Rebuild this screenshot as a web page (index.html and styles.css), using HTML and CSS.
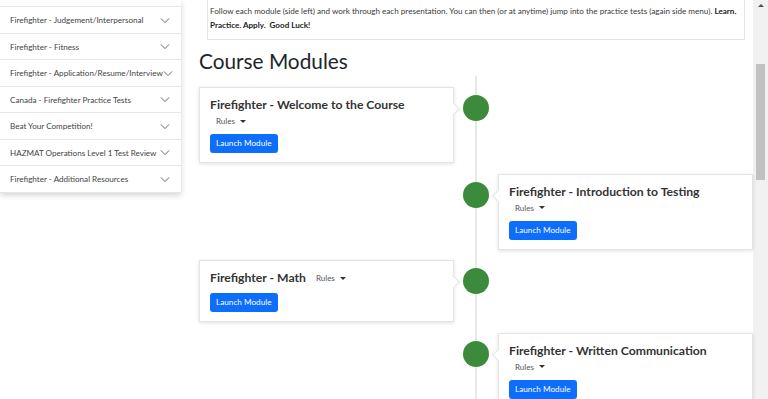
FILE: index.html
```html
<!DOCTYPE html>
<html>
<head>
<meta charset="utf-8">
<link rel="stylesheet" href="styles.css">
</head>
<body>
<div class="screen">
  <div class="page">
    <aside class="sidebar">
      <div class="side-item side-blank"></div>
      <div class="side-item"><span>Firefighter - Judgement/Interpersonal</span><svg class="chev" viewBox="0 0 12 8"><path d="M1 1.5 L6 6.5 L11 1.5" /></svg></div>
      <div class="side-item"><span>Firefighter - Fitness</span><svg class="chev" viewBox="0 0 12 8"><path d="M1 1.5 L6 6.5 L11 1.5" /></svg></div>
      <div class="side-item"><span>Firefighter - Application/Resume/Interview</span><svg class="chev" viewBox="0 0 12 8"><path d="M1 1.5 L6 6.5 L11 1.5" /></svg></div>
      <div class="side-item"><span>Canada - Firefighter Practice Tests</span><svg class="chev" viewBox="0 0 12 8"><path d="M1 1.5 L6 6.5 L11 1.5" /></svg></div>
      <div class="side-item"><span>Beat Your Competition!</span><svg class="chev" viewBox="0 0 12 8"><path d="M1 1.5 L6 6.5 L11 1.5" /></svg></div>
      <div class="side-item"><span>HAZMAT Operations Level 1 Test Review</span><svg class="chev" viewBox="0 0 12 8"><path d="M1 1.5 L6 6.5 L11 1.5" /></svg></div>
      <div class="side-item"><span>Firefighter - Additional Resources</span><svg class="chev" viewBox="0 0 12 8"><path d="M1 1.5 L6 6.5 L11 1.5" /></svg></div>
    </aside>
    <main class="main">
      <div class="intro">
        Follow each module (side left) and work through each presentation. You can then (or at anytime) jump into the practice tests (again side menu). <b>Learn. Practice. Apply.&nbsp; Good Luck!</b>
      </div>
      <h2 class="heading">Course Modules</h2>
      <div class="timeline">
        <div class="row">
          <div class="card card-left">
            <div class="card-title">Firefighter - Welcome to the Course</div>
            <div class="rules">Rules <span class="caret"></span></div>
            <button class="btn">Launch Module</button>
          </div>
          <div class="dot-col"><span class="dot"></span></div>
          <div class="empty"></div>
        </div>
        <div class="row">
          <div class="empty"></div>
          <div class="dot-col"><span class="dot"></span></div>
          <div class="card card-right">
            <div class="card-title">Firefighter - Introduction to Testing</div>
            <div class="rules">Rules <span class="caret"></span></div>
            <button class="btn">Launch Module</button>
          </div>
        </div>
        <div class="row">
          <div class="card card-left">
            <div class="title-line">
              <div class="card-title">Firefighter - Math</div>
              <div class="rules rules-inline">Rules <span class="caret"></span></div>
            </div>
            <button class="btn">Launch Module</button>
          </div>
          <div class="dot-col"><span class="dot"></span></div>
          <div class="empty"></div>
        </div>
        <div class="row">
          <div class="empty"></div>
          <div class="dot-col"><span class="dot"></span></div>
          <div class="card card-right">
            <div class="card-title">Firefighter - Written Communication</div>
            <div class="rules">Rules <span class="caret"></span></div>
            <button class="btn">Launch Module</button>
          </div>
        </div>
      </div>
    </main>
  </div>
  <div class="scrollbar">
    <div class="sb-arrow"></div>
    <div class="sb-thumb"></div>
  </div>
</div>
</body>
</html>
```

FILE: styles.css
```css
* { box-sizing: border-box; }
html, body { margin: 0; padding: 0; }
body {
  font-family: Lato, "Open Sans", "Liberation Sans", sans-serif;
  color: #212529;
  background: #fff;
  overflow: hidden;
}
.screen {
  display: flex;
  width: 768px;
  height: 399px;
  overflow: hidden;
}
.page {
  flex: 1;
  display: flex;
  align-items: flex-start;
  min-width: 0;
}
.sidebar {
  width: 181px;
  flex: none;
  background: #fff;
  box-shadow: 0 2px 6px rgba(0,0,0,0.18);
}
.side-item {
  height: 26.5px;
  display: flex;
  align-items: center;
  justify-content: space-between;
  padding: 1px 10px 0 10px;
  border-bottom: 1px solid #e6e6e6;
  font-size: 8.1px;
  color: #444;
  white-space: nowrap;
}
.side-blank { height: 7px; }
.chev {
  width: 10px;
  height: 7px;
  flex: none;
  margin-right: 1px;
}
.chev path { fill: none; stroke: #666; stroke-width: 1.2; }

.main {
  flex: 1;
  padding-left: 18px;
  min-width: 0;
}
.intro {
  margin: -1px 8px 0 8px;
  border: 1px solid #e3e3e3;
  border-top: none;
  padding: 5px 4px 7px 2px;
  font-size: 8.1px;
  line-height: 14px;
  color: #3a3a3a;
}
.intro b { color: #222; }
.heading {
  margin: 6px 0 0 0;
  font-size: 20.8px;
  font-weight: 400;
  line-height: 30px;
  color: #212529;
}
.timeline {
  margin-top: 0;
  padding-top: 11px;
  background-image: linear-gradient(#e8e8e8, #e8e8e8);
  background-size: 2px 100%;
  background-position: center top;
  background-repeat: no-repeat;
}
.row {
  display: grid;
  grid-template-columns: 1fr 44px 1fr;
  align-items: start;
  margin-bottom: 10.5px;
}
.card {
  position: relative;
  background: #fff;
  border: 1px solid #e4e4e4;
  box-shadow: 0 1px 4px rgba(0,0,0,0.12);
  padding: 8px 10px 9px 10px;
}
.card::after {
  content: "";
  position: absolute;
  top: 16px;
  width: 9px;
  height: 9px;
  background: #fff;
  transform: rotate(45deg);
}
.card-left::after {
  right: -5px;
  border-top: 1px solid #e4e4e4;
  border-right: 1px solid #e4e4e4;
}
.card-right::after {
  left: -5px;
  border-bottom: 1px solid #e4e4e4;
  border-left: 1px solid #e4e4e4;
}
.card-title {
  font-size: 12.2px;
  font-weight: 700;
  line-height: 18px;
  color: #333;
  white-space: nowrap;
}
.rules {
  font-size: 8px;
  line-height: 14px;
  color: #555;
  padding-left: 6px;
  display: flex;
  align-items: center;
}
.caret {
  display: inline-block;
  width: 0;
  height: 0;
  margin-left: 5px;
  border-left: 3px solid transparent;
  border-right: 3px solid transparent;
  border-top: 3.5px solid #333;
}
.title-line {
  display: flex;
  align-items: center;
}
.rules-inline { padding-left: 10px; }
.btn {
  display: block;
  margin-top: 6px;
  height: 19px;
  padding: 0 6px;
  border: none;
  border-radius: 3px;
  background: #0d6efd;
  color: #fff;
  font-family: inherit;
  font-size: 8.2px;
  line-height: 19px;
}
.dot-col {
  display: flex;
  justify-content: center;
  padding-top: 8px;
}
.dot {
  width: 26px;
  height: 26px;
  border-radius: 50%;
  background: #3c8b3c;
}
.scrollbar {
  width: 15px;
  flex: none;
  background: #f1f1f1;
  display: flex;
  flex-direction: column;
  align-items: center;
}
.sb-arrow {
  margin-top: 4px;
  width: 0;
  height: 0;
  border-left: 3px solid transparent;
  border-right: 3px solid transparent;
  border-bottom: 3px solid #505050;
}
.sb-thumb {
  margin-top: 57px;
  width: 9px;
  height: 116px;
  background: #c1c1c1;
}
```
